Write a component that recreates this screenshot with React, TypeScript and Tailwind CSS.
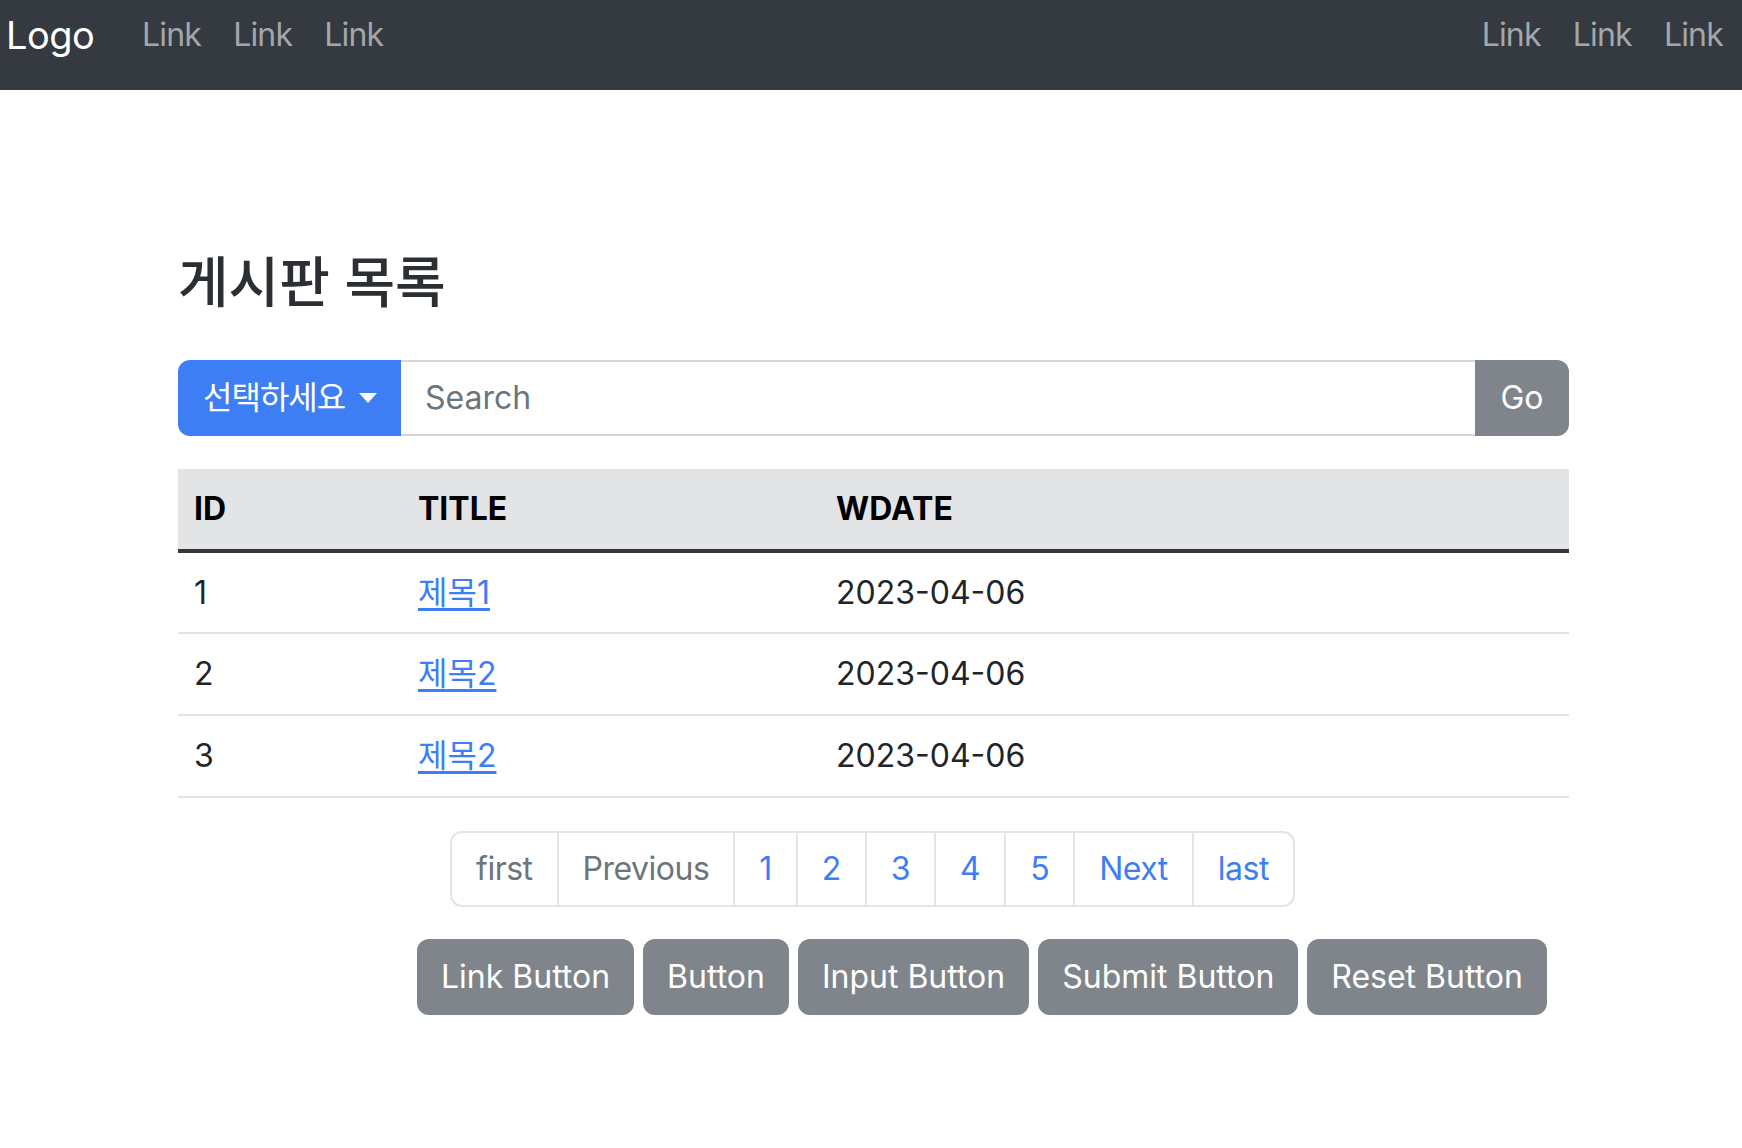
import React from 'react'

const font = { fontFamily: 'Inter, "Noto Sans CJK KR", sans-serif' }

export default function App() {
  const rows = [
    { id: 1, title: '제목1', wdate: '2023-04-06' },
    { id: 2, title: '제목2', wdate: '2023-04-06' },
    { id: 3, title: '제목2', wdate: '2023-04-06' },
  ]

  const pages = [
    { label: 'first', disabled: true },
    { label: 'Previous', disabled: true },
    { label: '1' },
    { label: '2' },
    { label: '3' },
    { label: '4' },
    { label: '5' },
    { label: 'Next' },
    { label: 'last' },
  ]

  const buttons = ['Link Button', 'Button', 'Input Button', 'Submit Button', 'Reset Button']

  return (
    <div className="min-h-[1148px] bg-white text-[#212529]" style={font}>
      {/* Navbar */}
      <nav className="h-[90px] bg-[#343a40] flex items-start justify-between pl-[6px] pr-[3px]">
        <div className="flex items-start">
          <span className="w-[120px] text-[38px] leading-[60px] mt-[5px] text-white tracking-[-0.5px]">Logo</span>
          {['Link', 'Link', 'Link'].map((l, i) => (
            <a key={i} href="#" className="text-[32px] leading-[48px] mt-[11px] text-[#a4a7aa] px-[16px] tracking-[-0.8px]">
              {l}
            </a>
          ))}
        </div>
        <div className="flex items-start">
          {['Link', 'Link', 'Link'].map((l, i) => (
            <a key={i} href="#" className="text-[32px] leading-[48px] mt-[11px] text-[#a4a7aa] px-[16px] tracking-[-0.8px]">
              {l}
            </a>
          ))}
        </div>
      </nav>

      <div className="w-[1391px] ml-[178px]">
        {/* Heading */}
        <h2 className="text-[55px] leading-[70px] font-medium mt-[157px] mb-[43px] text-[#2b2f33]">
          게시판 목록
        </h2>

        {/* Search group */}
        <div className="flex h-[76px]">
          <button className="w-[223px] h-full bg-[#3d7ef5] text-white text-[32px] rounded-l-[12px] flex items-center pl-[25px]">
            <span className="tracking-[-1px]">선택하세요</span>
            <span className="ml-[14px] w-0 h-0 border-t-[10px] border-t-white border-x-[9px] border-x-transparent"></span>
          </button>
          <div className="flex-1 h-full border-y-2 border-[#d4d7db] flex items-center pl-[24px]">
            <span className="text-[32px] text-[#6c757d]">Search</span>
          </div>
          <button className="w-[94px] h-full bg-[#7f858b] text-white text-[32px] rounded-r-[12px]">Go</button>
        </div>

        {/* Table */}
        <table className="w-full mt-[33px] border-collapse text-[32px]">
          <thead>
            <tr className="bg-[#e3e4e6] border-b-4 border-[#33363b]">
              <th className="w-[224px] h-[82px] px-[16px] text-left font-bold text-black">ID</th>
              <th className="w-[418px] h-[82px] px-[16px] text-left font-bold text-black">TITLE</th>
              <th className="h-[82px] px-[16px] text-left font-bold text-black">WDATE</th>
            </tr>
          </thead>
          <tbody>
            {rows.map((r) => (
              <tr key={r.id} className="border-b-2 border-[#e3e4e6]">
                <td className="h-[82px] px-[16px]">{r.id}</td>
                <td className="h-[82px] px-[16px]">
                  <a href="#" className="text-[#3d7ef5] underline underline-offset-[4px]">
                    {r.title}
                  </a>
                </td>
                <td className="h-[82px] px-[16px]">{r.wdate}</td>
              </tr>
            ))}
          </tbody>
        </table>

        {/* Pagination */}
        <div className="flex justify-center mt-[33px] pr-[2px]">
          <div className="flex h-[76px] border-2 border-[#e3e4e6] rounded-[12px]">
            {pages.map((p, i) => (
              <a
                key={i}
                href="#"
                className={
                  'flex items-center px-[24px] text-[32px] tracking-[-0.5px] ' +
                  (i > 0 ? 'border-l-2 border-[#e3e4e6] ' : '') +
                  (p.disabled ? 'text-[#6c757d]' : 'text-[#3d7ef5]')
                }
              >
                {p.label}
              </a>
            ))}
          </div>
        </div>

        {/* Buttons */}
        <div className="flex gap-[9px] mt-[32px] ml-[239px]">
          {buttons.map((b) => (
            <button
              key={b}
              className="h-[76px] px-[24px] bg-[#7f858b] text-white text-[32px] rounded-[12px]"
            >
              {b}
            </button>
          ))}
        </div>
      </div>
    </div>
  )
}
